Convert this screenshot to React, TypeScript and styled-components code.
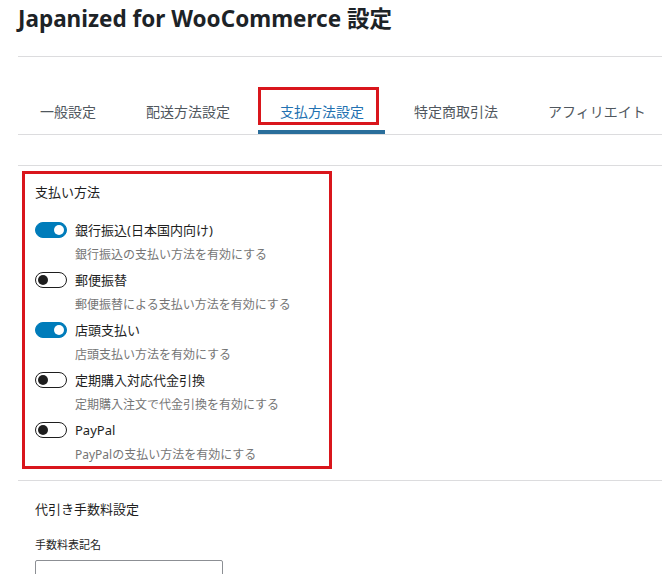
import React from "react";
import styled, { createGlobalStyle } from "styled-components";

const Global = createGlobalStyle`
  html, body { margin: 0; padding: 0; background: #fff; }
  body {
    font-family: "Noto Sans", "Noto Sans CJK JP", sans-serif;
    color: #1e1e1e;
    overflow: hidden;
  }
`;

const Page = styled.div`
  padding-left: 18px;
  width: 644px;
`;

const Title = styled.h1`
  margin: 0;
  font-size: 22.5px;
  font-weight: 700;
  line-height: 38px;
  color: #1d2327;
  border-bottom: 1px solid #dcdcde;
  box-sizing: border-box;
  height: 57px;
`;

const TabBar = styled.div`
  margin-top: 30px;
  display: flex;
  gap: 7px;
  border-bottom: 1px solid #dcdcde;
`;

const Tab = styled.div<{ $active?: boolean }>`
  position: relative;
  height: 47px;
  box-sizing: border-box;
  padding: 4px 21px 0 22px;
  display: flex;
  align-items: center;
  font-size: 14px;
  color: ${(p) => (p.$active ? "#2271b1" : "#50575e")};
  border-bottom: 4px solid ${(p) => (p.$active ? "#2a6e9b" : "transparent")};
  white-space: nowrap;
`;

const Highlight = styled.div<{ $w: string; $h: string }>`
  position: absolute;
  border: 3px solid #d9161c;
  box-sizing: border-box;
  pointer-events: none;
  width: ${(p) => p.$w};
  height: ${(p) => p.$h};
  left: 0;
  top: 0;
`;

const Section = styled.div`
  margin-top: 30px;
  border-top: 1px solid #dcdcde;
  padding-top: 5px;
`;

const Panel = styled.div`
  position: relative;
  margin-left: 4px;
  width: 310px;
  height: 298px;
  box-sizing: border-box;
  padding: 13px 0 0 13px;
`;

const PanelTitle = styled.div`
  font-size: 13px;
  line-height: 16px;
  height: 16px;
  color: #1e1e1e;
  margin-bottom: 22px;
`;

const Rows = styled.div`
  display: flex;
  flex-direction: column;
  gap: 9px;
`;

const Row = styled.div`
  display: grid;
  grid-template-columns: 32px 1fr;
  column-gap: 8px;
  row-gap: 9px;
  align-items: center;
`;

const Toggle = styled.span<{ $on?: boolean }>`
  position: relative;
  width: 32px;
  height: 16px;
  box-sizing: border-box;
  border-radius: 9px;
  border: 1px solid ${(p) => (p.$on ? "#007cba" : "#1e1e1e")};
  background: ${(p) => (p.$on ? "#007cba" : "#fff")};
  &::after {
    content: "";
    position: absolute;
    top: 2px;
    left: ${(p) => (p.$on ? "18px" : "2px")};
    width: 10px;
    height: 10px;
    border-radius: 50%;
    background: ${(p) => (p.$on ? "#fff" : "#1e1e1e")};
  }
`;

const Label = styled.span`
  font-size: 13px;
  line-height: 16px;
  color: #1e1e1e;
`;

const Help = styled.span`
  grid-column: 2;
  font-size: 12px;
  line-height: 16px;
  color: #757575;
`;

const Section2 = styled.div`
  margin-top: 11px;
  border-top: 1px solid #dcdcde;
  padding: 20px 0 0 17px;
`;

const SubTitle = styled.div`
  font-size: 13px;
  line-height: 16px;
  color: #1e1e1e;
  margin-bottom: 21px;
`;

const FieldLabel = styled.div`
  font-size: 11px;
  line-height: 14px;
  color: #1e1e1e;
  margin-bottom: 8px;
`;

const Input = styled.div`
  width: 188px;
  height: 32px;
  box-sizing: border-box;
  border: 1px solid #8c8f94;
  border-radius: 2px;
`;

const tabs = ["一般設定", "配送方法設定", "支払方法設定", "特定商取引法", "アフィリエイト"];

const methods = [
  { on: true, label: "銀行振込(日本国内向け)", help: "銀行振込の支払い方法を有効にする" },
  { on: false, label: "郵便振替", help: "郵便振替による支払い方法を有効にする" },
  { on: true, label: "店頭支払い", help: "店頭支払い方法を有効にする" },
  { on: false, label: "定期購入対応代金引換", help: "定期購入注文で代金引換を有効にする" },
  { on: false, label: "PayPal", help: "PayPalの支払い方法を有効にする" },
];

export default function App() {
  return (
    <Page>
      <Global />
      <Title>Japanized for WooCommerce 設定</Title>
      <TabBar>
        {tabs.map((t, i) => (
          <Tab key={t} $active={i === 2}>
            {i === 2 && <Highlight $w="121px" $h="38px" />}
            {t}
          </Tab>
        ))}
      </TabBar>
      <Section>
        <Panel>
          <Highlight $w="310px" $h="298px" />
          <PanelTitle>支払い方法</PanelTitle>
          <Rows>
            {methods.map((m) => (
              <Row key={m.label}>
                <Toggle $on={m.on} />
                <Label>{m.label}</Label>
                <Help>{m.help}</Help>
              </Row>
            ))}
          </Rows>
        </Panel>
      </Section>
      <Section2>
        <SubTitle>代引き手数料設定</SubTitle>
        <FieldLabel>手数料表記名</FieldLabel>
        <Input />
      </Section2>
    </Page>
  );
}
